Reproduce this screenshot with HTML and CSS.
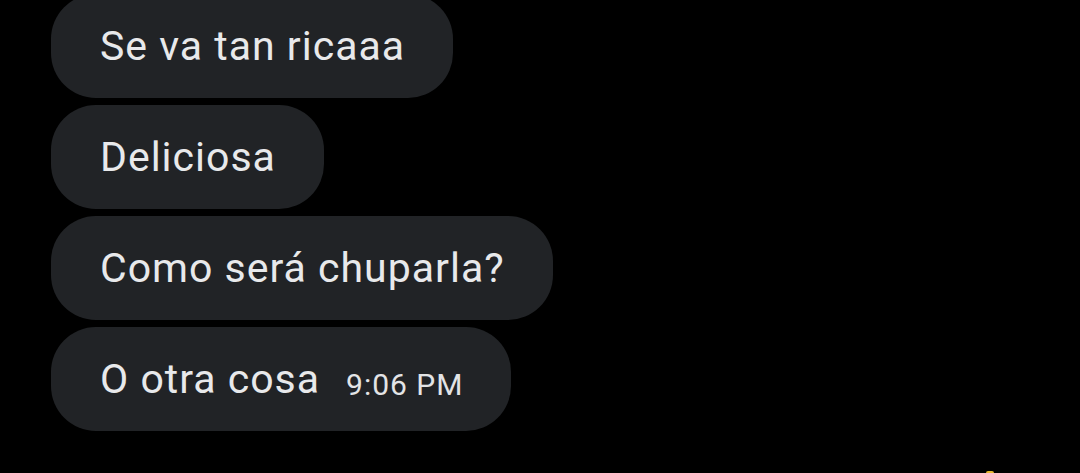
FILE: index.html
```html
<!DOCTYPE html>
<html>
<head>
<meta charset="utf-8">
<link rel="stylesheet" href="styles.css">
</head>
<body>
<div class="chat">
  <div class="bubble">Se va tan ricaaa</div>
  <div class="bubble">Deliciosa</div>
  <div class="bubble">Como será chuparla?</div>
  <div class="bubble"><span>O otra cosa</span><span class="time">9:06 PM</span></div>
</div>
<div class="corner-mark"></div>
</body>
</html>
```
FILE: styles.css
```css
html, body {
  margin: 0;
  padding: 0;
  background: #000;
  width: 1080px;
  height: 473px;
  overflow: hidden;
  position: relative;
}
.chat {
  display: flex;
  flex-direction: column;
  align-items: flex-start;
  gap: 7px;
  padding-left: 51px;
  margin-top: -6px;
}
.bubble {
  box-sizing: border-box;
  height: 104px;
  display: flex;
  align-items: center;
  padding: 0 48px 0 49px;
  background: #212326;
  border-radius: 45px;
  color: #e8e9eb;
  font-family: Roboto, "Noto Sans", sans-serif;
  font-size: 41px;
  letter-spacing: 1px;
  line-height: 1;
}
.time {
  font-size: 30px;
  letter-spacing: 1px;
  margin-left: 26px;
  position: relative;
  top: 6px;
  color: #e3e4e6;
}
.corner-mark {
  position: absolute;
  left: 986px;
  top: 471px;
  width: 8px;
  height: 2px;
  background: #e6b830;
  border-radius: 2px 2px 0 0;
}
```
